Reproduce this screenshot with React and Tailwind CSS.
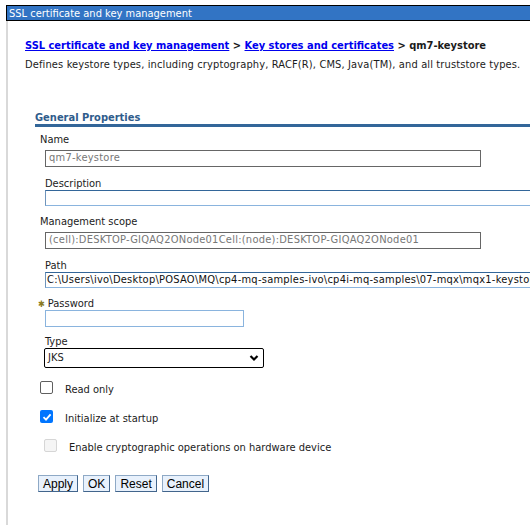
import React from 'react';

const font = { fontFamily: '"DejaVu Sans Condensed", "DejaVu Sans", sans-serif' };

function Box({ state }) {
  if (state === 'checked') {
    return (
      <span className="flex h-[13px] w-[13px] shrink-0 items-center justify-center rounded-[2px] bg-[#0075ff]">
        <svg width="10" height="10" viewBox="0 0 10 10">
          <path d="M1.5 5.2 L4 7.6 L8.6 2.4" fill="none" stroke="white" strokeWidth="1.8" />
        </svg>
      </span>
    );
  }
  if (state === 'disabled') {
    return <span className="block h-[13px] w-[13px] shrink-0 rounded-[2px] border border-[#d6d6d6] bg-[#f5f5f5]" />;
  }
  return <span className="block h-[13px] w-[13px] shrink-0 rounded-[2px] border border-[#5f5f5f] bg-white" />;
}

export default function App() {
  return (
    <div className="h-[525px] overflow-hidden bg-white text-[11px] text-[#1b1b1b]" style={font}>
      <div className="ml-[6px] pt-[5px]">
        {/* window title */}
        <div className="flex h-[16px] items-center border border-r-0 border-black bg-[#3274c4] pl-[2px] text-white leading-none">
          SSL certificate and key management
        </div>

        <div className="h-[505px] border-l-2 border-[#d9d9d9] pl-[17px]">
          <div className="pt-[18px] font-bold leading-[13px]">
            <a href="#" className="text-[#0000ee] underline">SSL certificate and key management</a>
            {' > '}
            <a href="#" className="text-[#0000ee] underline">Key stores and certificates</a>
            {' > qm7-keystore'}
          </div>
          <div className="mt-[6px] leading-[13px] tracking-[0.13px]">
            Defines keystore types, including cryptography, RACF(R), CMS, Java(TM), and all truststore types.
          </div>

          <div className="ml-[10px] mt-[41px]">
            <div className="border-b-[3px] border-[#336699] font-bold leading-[12px] text-[#2f5c8c]">
              General Properties
            </div>

            <div className="ml-[5px] mt-[7px] h-[12px] leading-[12px]">Name</div>
            <div className="ml-[10px] mt-[4px] flex h-[17px] w-[436px] items-center border border-[#666] px-[3px] tracking-[0.25px] text-[#777]">
              qm7-keystore
            </div>

            <div className="ml-[10px] mt-[11px] h-[12px] leading-[12px]">Description</div>
            <div className="ml-[10px] h-[16px] w-[500px] border-t border-b border-l border-t-[#336699] border-b-[#8ab4de] border-l-[#6f94bb]" />

            <div className="ml-[5px] mt-[10px] h-[12px] leading-[12px]">Management scope</div>
            <div className="ml-[10px] mt-[4px] flex h-[17px] w-[436px] items-center whitespace-nowrap border border-[#666] px-[3px] tracking-[0.25px] text-[#777]">
              (cell):DESKTOP-GIQAQ2ONode01Cell:(node):DESKTOP-GIQAQ2ONode01
            </div>

            <div className="ml-[10px] mt-[11px] h-[12px] leading-[12px]">Path</div>
            <div className="ml-[10px] flex h-[16px] w-[490px] items-center overflow-hidden whitespace-nowrap border-t border-b border-l border-t-[#336699] border-b-[#8ab4de] border-l-[#6f94bb] px-[1px] tracking-[0.25px] text-[#111]">
              C:\Users\ivo\Desktop\POSAO\MQ\cp4-mq-samples-ivo\cp4i-mq-samples\07-mqx\mqx1-keystore.jks
            </div>

            <div className="ml-[3px] mt-[10px] flex h-[12px] items-center leading-[12px]">
              <span className="text-[9px] text-[#8a7a22]">✱</span>
              <span className="ml-[3px]">Password</span>
            </div>
            <div className="ml-[10px] h-[17px] w-[199px] border border-[#8ab4de]" />

            <div className="ml-[10px] mt-[9px] h-[12px] leading-[12px]">Type</div>
            <div className="ml-[9px] flex h-[20px] w-[220px] items-center justify-between rounded-[2px] border border-black pl-[3px] pr-[4px]">
              <span>JKS</span>
              <svg width="10" height="8" viewBox="0 0 10 8">
                <path d="M1.5 2 L5 5.5 L8.5 2" fill="none" stroke="black" strokeWidth="2.2" />
              </svg>
            </div>

            <div className="ml-[5px] mt-[13px] flex h-[13px] items-start">
              <Box state="unchecked" />
              <span className="ml-[12px] mt-[3px] leading-[12px]">Read only</span>
            </div>
            <div className="ml-[5px] mt-[16px] flex h-[13px] items-start">
              <Box state="checked" />
              <span className="ml-[12px] mt-[3px] leading-[12px]">Initialize at startup</span>
            </div>
            <div className="ml-[9px] mt-[16px] flex h-[13px] items-start">
              <Box state="disabled" />
              <span className="ml-[12px] mt-[3px] whitespace-nowrap leading-[12px]">Enable cryptographic operations on hardware device</span>
            </div>

            <div className="ml-[3px] mt-[23px] flex gap-[5px] text-[12px] leading-none" style={{ fontFamily: '"Liberation Sans", Arial, sans-serif' }}>
              {['Apply', 'OK', 'Reset', 'Cancel'].map((b) => (
                <button
                  key={b}
                  className="h-[17px] border border-[#8ea9c6] border-b-[#42658c] border-r-[#42658c] bg-[#e8f1fc] px-[4px] text-black"
                >
                  {b}
                </button>
              ))}
            </div>
          </div>
        </div>
      </div>
    </div>
  );
}
